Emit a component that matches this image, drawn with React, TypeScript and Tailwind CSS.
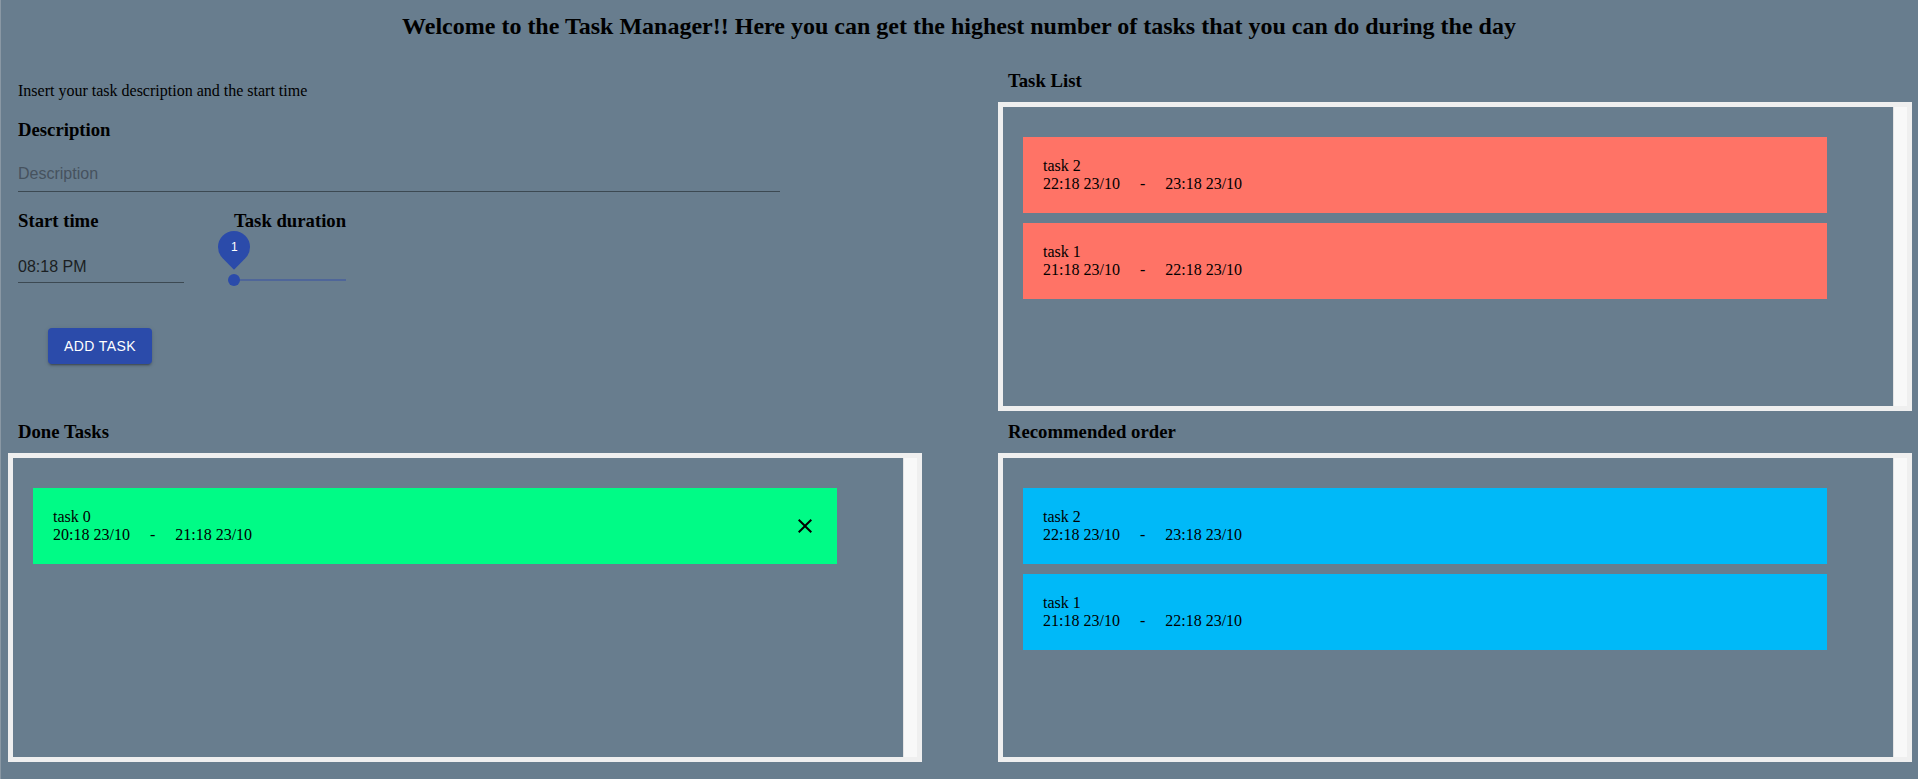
import React from "react";

type Task = { name: string; start: string; end: string };

const taskList: Task[] = [
  { name: "task 2", start: "22:18 23/10", end: "23:18 23/10" },
  { name: "task 1", start: "21:18 23/10", end: "22:18 23/10" },
];

const doneTasks: Task[] = [
  { name: "task 0", start: "20:18 23/10", end: "21:18 23/10" },
];

const gap = "\u00a0\u00a0\u00a0\u00a0\u00a0";

function TaskCard({
  task,
  color,
  removable,
}: {
  readonly task: Task;
  readonly color: string;
  readonly removable?: boolean;
}) {
  return (
    <div className={`flex w-[804px] items-center justify-between p-5 ${color}`}>
      <div className="text-[16px] leading-[18px] text-black">
        <div>{task.name}</div>
        <div>
          {task.start}
          {gap}-{gap}
          {task.end}
        </div>
      </div>
      {removable && (
        <button type="button" className="h-6 w-6 text-black">
          <svg viewBox="0 0 24 24" className="h-6 w-6" fill="currentColor">
            <path d="M19 6.41 17.59 5 12 10.59 6.41 5 5 6.41 10.59 12 5 17.59 6.41 19 12 13.41 17.59 19 19 17.59 13.41 12z" />
          </svg>
        </button>
      )}
    </div>
  );
}

function TaskBox({ children }: { readonly children: React.ReactNode }) {
  return (
    <div className="flex h-[309px] border-[5px] border-[#efefef]">
      <div className="flex flex-1 flex-col gap-[10px] pl-5 pt-[30px]">
        {children}
      </div>
      {/* scrollbar track */}
      <div className="w-[14px] border-l border-[#e4e4e4] bg-[#f8f8f8]" />
    </div>
  );
}

function SectionTitle({ children }: { readonly children: React.ReactNode }) {
  return (
    <h3 className="pl-[10px] text-[18.72px] font-bold leading-[22px] text-black">
      {children}
    </h3>
  );
}

function DurationSlider() {
  return (
    <div className="relative mt-[47px] h-[2px] w-[112px] bg-[#4f6699]">
      {/* value label */}
      <div className="absolute left-[-16px] top-[-48px] flex h-8 w-8 -rotate-45 items-center justify-center rounded-[50%_50%_50%_0] bg-[#2b4baa]">
        <span className="rotate-45 font-['Liberation_Sans',Arial,sans-serif] text-[12px] leading-none text-white">
          1
        </span>
      </div>
      {/* thumb */}
      <div className="absolute left-[-6px] top-[-5px] h-3 w-3 rounded-full bg-[#2b4baa]" />
    </div>
  );
}

function TaskForm() {
  return (
    <div className="pl-[10px] pt-[43px]">
      <p className="text-[16px] leading-[18px] text-black">
        Insert your task description and the start time
      </p>
      <h3 className="mt-[19px] text-[18.72px] font-bold leading-[22px] text-black">
        Description
      </h3>
      <div className="mt-[18px] w-[762px] border-b border-[#3c4952] pb-[8px] pt-[5px]">
        <input
          placeholder="Description"
          className="block h-[19px] w-full bg-transparent font-['Liberation_Sans',Arial,sans-serif] text-[16px] leading-[19px] text-[#1b1f23] outline-none placeholder:text-[#46525e]"
        />
      </div>

      <div className="mt-[18px] flex">
        <div className="w-[216px]">
          <h3 className="text-[18.72px] font-bold leading-[22px] text-black">
            Start time
          </h3>
          <div className="mt-[18px] w-[166px] border-b border-[#3c4952] pb-[6px] pt-[7px]">
            <span className="block font-['Liberation_Sans',Arial,sans-serif] text-[16px] leading-[19px] text-[#1b1f23]">
              08:18 PM
            </span>
          </div>
        </div>
        <div>
          <h3 className="text-[18.72px] font-bold leading-[22px] text-black">
            Task duration
          </h3>
          <DurationSlider />
        </div>
      </div>

      <button
        type="button"
        className="ml-[30px] mt-[45px] h-9 w-[104px] rounded bg-[#2b4baa] font-['Liberation_Sans',Arial,sans-serif] text-[14px] font-medium uppercase tracking-[0.02857em] text-white shadow-[0px_3px_1px_-2px_rgba(0,0,0,0.2),0px_2px_2px_0px_rgba(0,0,0,0.14),0px_1px_5px_0px_rgba(0,0,0,0.12)]"
      >
        Add Task
      </button>
    </div>
  );
}

export default function App() {
  return (
    <div className="min-h-screen w-full bg-[#687d8e] font-['Liberation_Serif','Times_New_Roman',serif] shadow-[inset_1px_0_0_#8a98a4]">
      <h2 className="pt-[12px] text-center text-[24px] font-bold leading-[28px] text-black">
        Welcome to the Task Manager!! Here you can get the highest number of
        tasks that you can do during the day
      </h2>

      <div className="-mt-px grid grid-cols-[914px_914px] gap-x-[76px] pl-2">
        <TaskForm />

        <section className="pt-[31px]">
          <SectionTitle>Task List</SectionTitle>
          <div className="mt-[10px]">
            <TaskBox>
              {taskList.map((t) => (
                <TaskCard key={t.name} task={t} color="bg-[#ff7366]" />
              ))}
            </TaskBox>
          </div>
        </section>

        <section className="pt-[10px]">
          <SectionTitle>Done Tasks</SectionTitle>
          <div className="mt-[10px]">
            <TaskBox>
              {doneTasks.map((t) => (
                <TaskCard
                  key={t.name}
                  task={t}
                  color="bg-[#00fb86]"
                  removable
                />
              ))}
            </TaskBox>
          </div>
        </section>

        <section className="pt-[10px]">
          <SectionTitle>Recommended order</SectionTitle>
          <div className="mt-[10px]">
            <TaskBox>
              {taskList.map((t) => (
                <TaskCard key={t.name} task={t} color="bg-[#00b9f8]" />
              ))}
            </TaskBox>
          </div>
        </section>
      </div>
    </div>
  );
}
